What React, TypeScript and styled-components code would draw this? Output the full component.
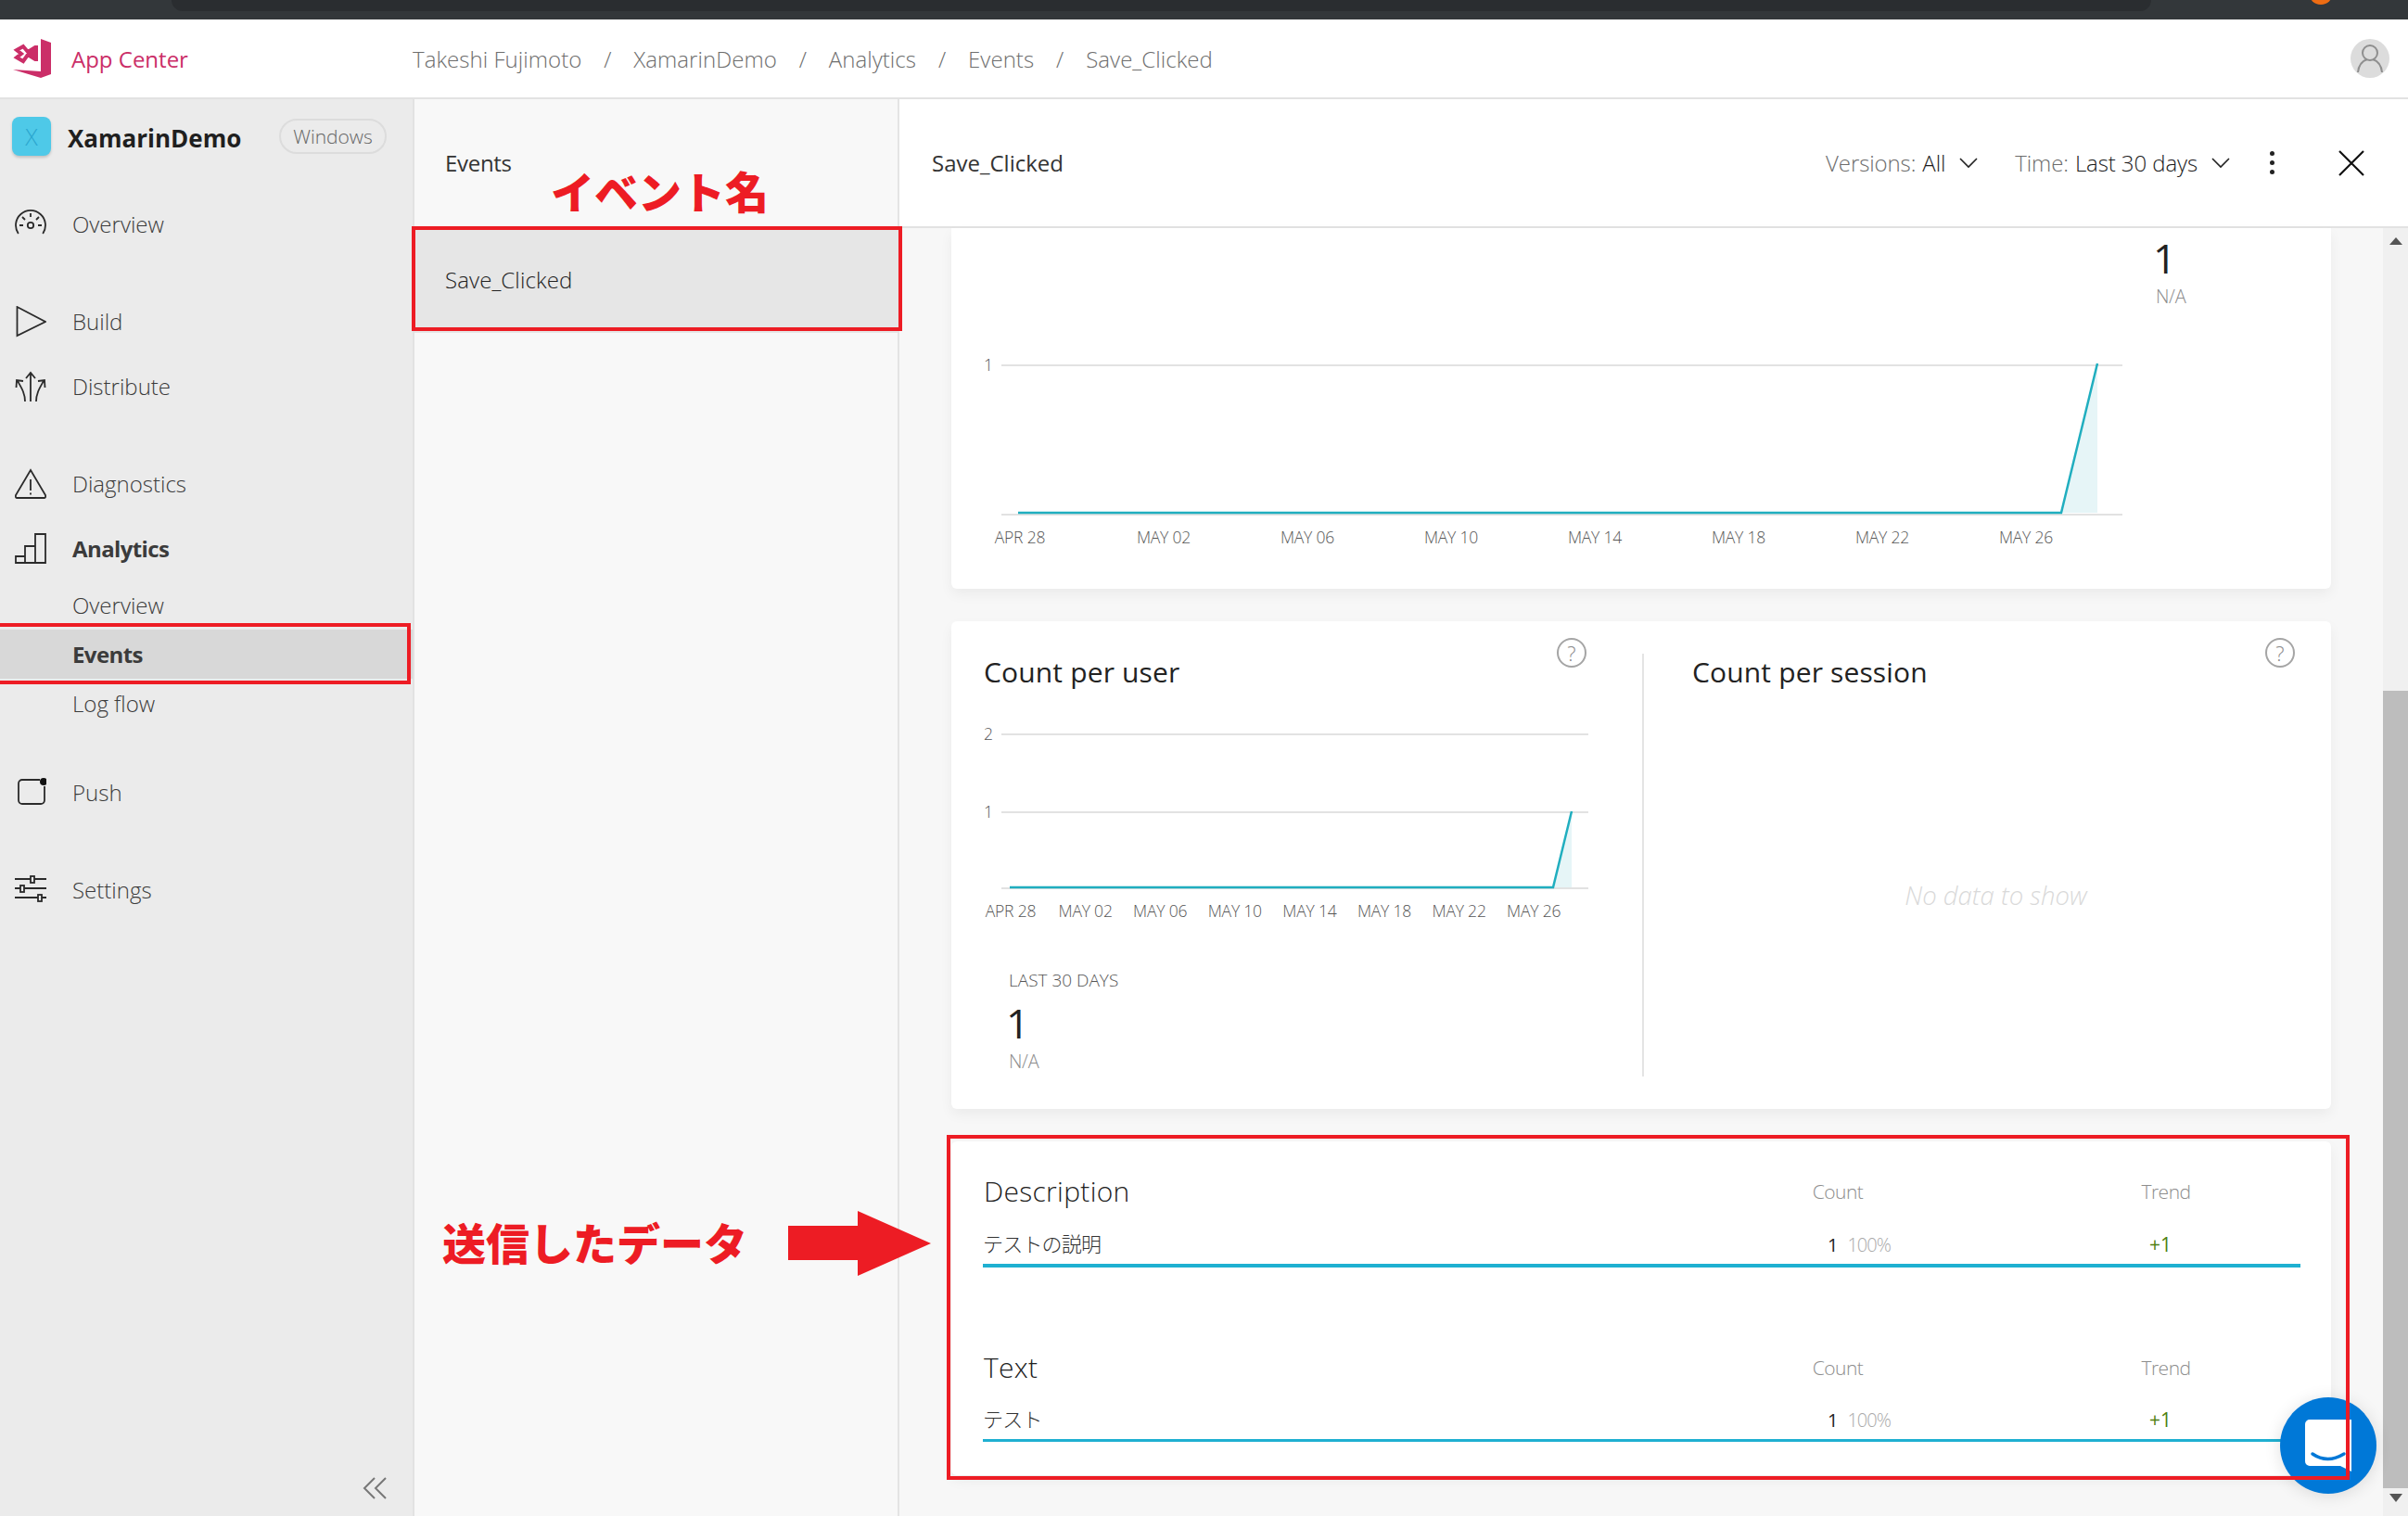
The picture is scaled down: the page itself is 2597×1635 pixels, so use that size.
import React from "react";
import styled, { createGlobalStyle } from "styled-components";

const Global = createGlobalStyle`
  html, body { margin: 0; padding: 0; background: #fff; }
  * { box-sizing: border-box; }
  body { font-family: "Open Sans", "Noto Sans CJK JP", sans-serif; color: #333; }
`;

const Page = styled.div`position: relative; width: 2597px; height: 1635px; display: flex; flex-direction: column; overflow: hidden;`;
const BrowserBar = styled.div`height: 21px; flex: none; background: #33373a; display: flex; overflow: hidden;`;
const AddressBar = styled.div`margin-left: 185px; width: 2135px; height: 12px; background: #2a2d30; border-radius: 0 0 14px 14px;`;
const OrangeDot = styled.div`margin: -21px 0 0 170px; width: 26px; height: 26px; border-radius: 50%; background: #ee6c13;`;

const Header = styled.header`height: 86px; flex: none; background: #fff; border-bottom: 2px solid #e2e2e2; display: flex; align-items: center; padding-left: 14px; padding-right: 20px;`;
const Brand = styled.div`width: 431px; display: flex; align-items: center; gap: 21px; color: #cb2e68; font-size: 24px;`;
const Crumbs = styled.nav`display: flex; align-items: center; flex: 1; font-size: 24px; font-weight: 300; color: #6e6e6e; letter-spacing: 0.05px;`;
const Sep = styled.span`width: 56px; text-align: center;`;
const Avatar = styled.div`width: 42px; height: 42px; border-radius: 50%; background: #dcdcdc; display: flex; align-items: center; justify-content: center;`;

const Body = styled.div`flex: 1; display: flex; min-height: 0;`;
const Sidebar = styled.aside`width: 447px; flex: none; background: #ebebeb; border-right: 2px solid #e2e2e2; display: flex; flex-direction: column;`;
const AppRow = styled.div`margin: 19px 0 0 13px; height: 42px; display: flex; align-items: center;`;
const AppIcon = styled.div`width: 42px; height: 42px; border-radius: 8px; background: #4ec9e8; color: #2ba6cf; font-size: 25px; font-weight: 300; display: flex; align-items: center; justify-content: center; box-shadow: 0 2px 3px rgba(0,0,0,.18);`;
const AppName = styled.div`margin-left: 18px; padding-top: 4px; width: 228px; font-size: 26px; font-weight: 700; color: #1f1f1f;`;
const Pill = styled.div`width: 116px; height: 38px; border: 2px solid #dcdcdc; border-radius: 19px; display: flex; align-items: center; justify-content: center; font-size: 21px; font-weight: 300; color: #666;`;
const NavGroup = styled.div<{ $top: number; $gap?: number }>`margin-top: ${p => p.$top}px; display: flex; flex-direction: column; gap: ${p => p.$gap ?? 0}px;`;
const NavLabel = styled.span`margin-top: -2px;`;
const NavItem = styled.div<{ $bold?: boolean }>`height: 60px; display: flex; align-items: center; padding-left: 16px; gap: 28px; font-size: 24px; font-weight: ${p => (p.$bold ? 700 : 300)}; color: #3b3b3b; letter-spacing: ${p => (p.$bold ? "-0.6px" : "0")};`;
const SubList = styled.div`margin-top: -6px; display: flex; flex-direction: column;`;
const SubItem = styled.div<{ $active?: boolean }>`height: 53px; display: flex; align-items: center; padding-left: 78px; font-size: 24px; font-weight: ${p => (p.$active ? 700 : 300)}; color: #3b3b3b; letter-spacing: ${p => (p.$active ? "-0.6px" : "0")}; background: ${p => (p.$active ? "#d8d8d8" : "transparent")};`;
const Collapse = styled.div`margin-top: auto; height: 60px; display: flex; align-items: center; justify-content: flex-end; padding-right: 28px;`;
const IconSvg = styled.svg`width: 34px; height: 34px; flex: none; fill: none; stroke: #2b2b2b; stroke-width: 1.8;`;

const EventsPanel = styled.section`width: 523px; flex: none; background: #f8f8f8; border-right: 2px solid #e4e4e4;`;
const PanelHead = styled.div`height: 137px; display: flex; align-items: center; padding-left: 33px; font-size: 24px; color: #333; letter-spacing: -0.3px;`;
const EventRow = styled.div`height: 113px; margin-top: 2px; padding-bottom: 2px; background: #e6e6e6; display: flex; align-items: center; padding-left: 33px; font-size: 24px; font-weight: 300; color: #222; letter-spacing: 0.1px;`;

const Detail = styled.main`flex: 1; min-width: 0; display: flex; flex-direction: column;`;
const DetailHead = styled.div`height: 139px; flex: none; background: #fff; border-bottom: 2px solid #e2e2e2; display: flex; align-items: center; padding-left: 35px; padding-right: 47px; font-size: 24px; font-weight: 300;`;
const DetailTitle = styled.div`flex: 1; font-weight: 400; font-size: 24px; color: #333;`;
const Filter = styled.div<{ $gap: number }>`display: flex; align-items: center; margin-right: ${p => p.$gap}px; color: #6c6c6c; letter-spacing: -0.1px;`;
const FilterValue = styled.span`color: #1c1c1c; margin-left: 7px; margin-right: 15px;`;
const Kebab = styled.div`width: 6px; display: flex; flex-direction: column; gap: 5px; margin-right: 68px;`;
const Dot = styled.i`width: 5px; height: 5px; border-radius: 50%; background: #222;`;

const Scroller = styled.div`flex: 1; min-height: 0; display: flex; background: #f7f7f7;`;
const Content = styled.div`flex: 1; padding: 0 56px; display: flex; flex-direction: column;`;
const Card = styled.section`background: #fff; border-radius: 6px; box-shadow: 0 6px 14px rgba(0,0,0,.05);`;
const TrendCard = styled(Card)`height: 389px; display: flex; padding-left: 20px; border-radius: 0 0 6px 6px;`;
const Chart = styled.svg`display: block; flex: none; overflow: visible;`;
const AxisText = styled.text`font-family: "Open Sans", sans-serif; font-size: 17.5px; font-weight: 300; fill: #555; letter-spacing: -0.2px;`;
const TrendChart = styled(Chart)`margin-top: 120px; margin-right: 19px;`;
const Stat = styled.div<{ $top: number; $left?: number }>`margin-top: ${p => p.$top}px; margin-left: ${p => p.$left ?? 0}px;`;
const StatLabel = styled.div`font-size: 19px; line-height: 24px; font-weight: 300; color: #555;`;
const StatValue = styled.div<{ $top?: number }>`margin: ${p => p.$top ?? 0}px 0 0 -3px; font-size: 44px; line-height: 48px; font-weight: 400; color: #222;`;
const StatDelta = styled.div`margin-top: 6px; font-size: 20px; line-height: 24px; font-weight: 300; color: #8c8c8c; letter-spacing: -0.3px;`;

const SplitCard = styled(Card)`margin-top: 35px; height: 526px; display: flex;`;
const LeftCol = styled.div`width: 745px; flex: none; padding: 18px 60px 0 35px;`;
const RightCol = styled.div`flex: 1; padding: 18px 39px 0 52px;`;
const Divider = styled.div`width: 2px; flex: none; margin: 35px 0; background: #e4e4e4;`;
const CardHead = styled.div`display: flex; justify-content: space-between; align-items: flex-start;`;
const CardTitle = styled.h2`margin: 17px 0 0; font-size: 30px; line-height: 40px; font-weight: 400; color: #222; letter-spacing: 0.15px;`;
const Help = styled.div`width: 32px; height: 32px; border: 2px solid #a5a5a5; border-radius: 50%; display: flex; align-items: center; justify-content: center; font-size: 22px; font-weight: 300; color: #8a8a8a;`;
const UserChart = styled(Chart)`margin: 25px 0 0 -15px;`;
const Empty = styled.div`margin-top: 201px; padding-left: 5px; text-align: center; font-size: 27.5px; line-height: 40px; font-style: italic; font-weight: 300; color: #d9d9d9;`;

const PropsCard = styled(Card)`margin-top: 35px; height: 360px; padding: 33px 34px 0;`;
const PropGroup = styled.div<{ $top?: number }>`margin-top: ${p => p.$top ?? 0}px;`;
const Grid = styled.div`display: grid; grid-template-columns: 709px 426px 282px; align-items: center; height: 40px;`;
const PropTitle = styled.div`padding-left: 1px; font-size: 30px; font-weight: 300; color: #222; letter-spacing: 0.3px;`;
const ColHead = styled.div`font-size: 21px; font-weight: 300; color: #8d8d8d; text-align: center; letter-spacing: -0.5px;`;
const ValueGrid = styled(Grid)<{ $top: number }>`margin-top: ${p => p.$top}px;`;
const PropName = styled.div`padding-bottom: 4px; font-size: 22px; font-weight: 300; color: #333; font-family: "Noto Sans CJK JP", sans-serif; letter-spacing: -0.8px;`;
const CountCell = styled.div`padding-left: 202px; display: flex; align-items: baseline; gap: 10px; font-size: 20px; color: #222;`;
const Percent = styled.span`color: #aaa; font-weight: 300; letter-spacing: -1px;`;
const Delta = styled.div`padding-right: 12px; text-align: center; font-size: 21px; color: #4e7f10;`;
const Bar = styled.div<{ $h: number }>`margin-top: 1px; margin-right: -1px; height: ${p => p.$h}px; background: #1fb0d1;`;

const Scrollbar = styled.div`width: 27px; flex: none; background: #f0f0f0; display: flex; flex-direction: column; align-items: center;`;
const ArrowCap = styled.svg`width: 14px; height: 30px; flex: none; fill: #555;`;
const Thumb = styled.div`margin-top: 469px; width: 100%; height: 873px; background: #bdbdbd;`;

const Overlay = styled.div<{ $x: number; $y: number; $w: number; $h: number }>`position: absolute; left: ${p => p.$x}px; top: ${p => p.$y}px; width: ${p => p.$w}px; height: ${p => p.$h}px; border: 4px solid #ed1c24;`;
const Note = styled.div<{ $x: number; $y: number; $size: number }>`position: absolute; left: ${p => p.$x}px; top: ${p => p.$y}px; font-family: "Noto Sans CJK JP", sans-serif; font-weight: 900; font-size: ${p => p.$size}px; line-height: 1; color: #ed1c24; white-space: nowrap;`;
const ArrowSvg = styled.svg`position: absolute; left: 850px; top: 1306px; width: 154px; height: 70px; fill: #ed1c24;`;
const ChatBubble = styled.div`position: absolute; left: 2459px; top: 1507px; width: 104px; height: 104px; border-radius: 50%; background: #0078d7; display: flex; align-items: center; justify-content: center; box-shadow: 0 2px 18px rgba(0,0,0,.12);`;

const Icon = ({ children }: { children: React.ReactNode }) => <IconSvg viewBox="0 0 34 34">{children}</IconSvg>;

const Logo = () => (
  <svg width="42" height="43" viewBox="0 0 42 43" style={{ flex: "none" }}>
    <path fill="#cb2e68" d="M30 0 L41 4 V38 L30 42 L0 33 L30 35 Z" />
    <path fill="none" stroke="#cb2e68" strokeWidth="4" d="M4 12 L11 8 L16 14 L24 9 H25 V22 H24 L16 17 L11 24 L4 20 L9 16 Z" />
    <path fill="#cb2e68" d="M16 14 L25 9 V22 L16 17 Z" />
  </svg>
);

const Chevron = () => (
  <svg width="20" height="12" viewBox="0 0 20 12" fill="none" stroke="#222" strokeWidth="1.6"><path d="M1 1 L10 10 L19 1" /></svg>
);

const TeamLabels = ["APR 28", "MAY 02", "MAY 06", "MAY 10", "MAY 14", "MAY 18", "MAY 22", "MAY 26"];

const TrendGraph = () => (
  <TrendChart width={1260} height={240} viewBox="0 0 1260 240">
    <AxisText x={15} y={34}>1</AxisText>
    <line x1={34} x2={1243} y1={28} y2={28} stroke="#e2e2e2" strokeWidth={2} />
    <line x1={34} x2={1243} y1={189} y2={189} stroke="#e2e2e2" strokeWidth={2} />
    <path d="M1177 187 L1216 26 V187 Z" fill="#e6f5f7" />
    <path d="M52 187 H1177 L1216 26" fill="none" stroke="#20aebf" strokeWidth={2.5} />
    {TeamLabels.map((l, i) => (
      <AxisText key={l} x={54 + i * 155} y={220} textAnchor="middle">{l}</AxisText>
    ))}
  </TrendChart>
);

const UserGraph = () => (
  <UserChart width={680} height={230} viewBox="0 0 680 230">
    <AxisText x={15} y={28}>2</AxisText>
    <AxisText x={15} y={112}>1</AxisText>
    <line x1={34} x2={667} y1={22} y2={22} stroke="#e2e2e2" strokeWidth={2} />
    <line x1={34} x2={667} y1={106} y2={106} stroke="#e2e2e2" strokeWidth={2} />
    <line x1={34} x2={667} y1={188} y2={188} stroke="#e2e2e2" strokeWidth={2} />
    <path d="M629 187 L649 105 V187 Z" fill="#e6f5f7" />
    <path d="M43 187 H629 L649 105" fill="none" stroke="#20aebf" strokeWidth={2.5} />
    {TeamLabels.map((l, i) => (
      <AxisText key={l} x={44 + i * 80.6} y={219} textAnchor="middle">{l}</AxisText>
    ))}
  </UserChart>
);

const PropBlock = ({ title, value, top, bar, valueTop }: { title: string; value: string; top?: number; bar: number; valueTop: number }) => (
  <PropGroup $top={top}>
    <Grid>
      <PropTitle>{title}</PropTitle>
      <ColHead>Count</ColHead>
      <ColHead>Trend</ColHead>
    </Grid>
    <ValueGrid $top={valueTop}>
      <PropName>{value}</PropName>
      <CountCell>1 <Percent>100%</Percent></CountCell>
      <Delta>+1</Delta>
    </ValueGrid>
    <Bar $h={bar} />
  </PropGroup>
);

export default function App() {
  return (
    <Page>
      <Global />
      <BrowserBar><AddressBar /><OrangeDot /></BrowserBar>
      <Header>
        <Brand><Logo />App Center</Brand>
        <Crumbs>
          <span>Takeshi Fujimoto</span><Sep>/</Sep>
          <span>XamarinDemo</span><Sep>/</Sep>
          <span>Analytics</span><Sep>/</Sep>
          <span>Events</span><Sep>/</Sep>
          <span>Save_Clicked</span>
        </Crumbs>
        <Avatar>
          <svg width="30" height="34" viewBox="0 0 30 34" fill="none" stroke="#8e8e8e" strokeWidth="2">
            <circle cx="15" cy="11" r="8" />
            <path d="M2 32 C3 22 9 19 12 18 M28 32 C27 22 21 19 18 18" />
          </svg>
        </Avatar>
      </Header>
      <Body>
        <Sidebar>
          <AppRow>
            <AppIcon>X</AppIcon>
            <AppName>XamarinDemo</AppName>
            <Pill>Windows</Pill>
          </AppRow>
          <NavGroup $top={44}>
            <NavItem>
              <Icon>
                <path d="M3.8 27 A16 16 0 1 1 30.2 27" />
                <circle cx="17" cy="18" r="3.2" />
                <path d="M17 5 V9 M5 18 H9 M25 18 H29 M8 9 L11 12 M26 9 L23 12" />
              </Icon>
              <NavLabel>Overview</NavLabel>
            </NavItem>
          </NavGroup>
          <NavGroup $top={45} $gap={10}>
            <NavItem><Icon><path d="M2.5 1 L33 17 L2.5 32 Z" /></Icon><NavLabel>Build</NavLabel></NavItem>
            <NavItem>
              <Icon>
                <path d="M17 33 V2 M12 8 L17 2 L22 8" />
                <path d="M11 33 C11 24 7 18 3 11 M1.5 18 L2 10 L9 11" />
                <path d="M23 33 C23 24 27 18 31 11 M32.5 18 L32 10 L25 11" />
              </Icon>
              <NavLabel>Distribute</NavLabel>
            </NavItem>
          </NavGroup>
          <NavGroup $top={45} $gap={10}>
            <NavItem>
              <Icon>
                <path d="M17 2 L33 29 Q33.5 32 32 32 H2 Q.5 32 1 29 Z" />
                <path d="M17 12 V24 M17 26.5 V28.5" />
              </Icon>
              <NavLabel>Diagnostics</NavLabel>
            </NavItem>
            <NavItem $bold>
              <Icon>
                <path d="M1 25 H11 V32 H1 Z M11 14 H22 V32 H11 Z M22 1 H33 V32 H22 Z" />
              </Icon>
              <NavLabel>Analytics</NavLabel>
            </NavItem>
            <SubList>
              <SubItem>Overview</SubItem>
              <SubItem $active>Events</SubItem>
              <SubItem>Log flow</SubItem>
            </SubList>
          </NavGroup>
          <NavGroup $top={40}>
            <NavItem>
              <Icon>
                <path d="M27 3 H8 a4 4 0 0 0 -4 4 V25 a4 4 0 0 0 4 4 H28 a4 4 0 0 0 4 -4 V10" />
                <circle cx="31" cy="5" r="4" fill="#111" stroke="none" />
              </Icon>
              <NavLabel>Push</NavLabel>
            </NavItem>
          </NavGroup>
          <NavGroup $top={45}>
            <NavItem>
              <Icon>
                <path d="M0 5 H17 M21 5 H34 M0 15 H6 M10 15 H34 M0 25 H25 M29 25 H34" />
                <rect x="17" y="2" width="4" height="7" />
                <rect x="6" y="12" width="4" height="7" />
                <rect x="25" y="22" width="4" height="7" />
              </Icon>
              <NavLabel>Settings</NavLabel>
            </NavItem>
          </NavGroup>
          <Collapse>
            <svg width="26" height="24" viewBox="0 0 26 24" fill="none" stroke="#777" strokeWidth="2">
              <path d="M13 1 L2 12 L13 23 M25 1 L14 12 L25 23" />
            </svg>
          </Collapse>
        </Sidebar>
        <EventsPanel>
          <PanelHead>Events</PanelHead>
          <EventRow>Save_Clicked</EventRow>
        </EventsPanel>
        <Detail>
          <DetailHead>
            <DetailTitle>Save_Clicked</DetailTitle>
            <Filter $gap={40}>Versions:<FilterValue>All</FilterValue><Chevron /></Filter>
            <Filter $gap={43}>Time:<FilterValue>Last 30 days</FilterValue><Chevron /></Filter>
            <Kebab><Dot /><Dot /><Dot /></Kebab>
            <svg width="28" height="28" viewBox="0 0 28 28" fill="none" stroke="#111" strokeWidth="2.2"><path d="M1 1 L27 27 M27 1 L1 27" /></svg>
          </DetailHead>
          <Scroller>
            <Content>
              <TrendCard>
                <TrendGraph />
                <Stat $top={8}>
                  <StatValue>1</StatValue>
                  <StatDelta>N/A</StatDelta>
                </Stat>
              </TrendCard>
              <SplitCard>
                <LeftCol>
                  <CardHead><CardTitle>Count per user</CardTitle><Help>?</Help></CardHead>
                  <UserGraph />
                  <Stat $top={45} $left={27}>
                    <StatLabel>LAST 30 DAYS</StatLabel>
                    <StatValue $top={10}>1</StatValue>
                    <StatDelta>N/A</StatDelta>
                  </Stat>
                </LeftCol>
                <Divider />
                <RightCol>
                  <CardHead><CardTitle>Count per session</CardTitle><Help>?</Help></CardHead>
                  <Empty>No data to show</Empty>
                </RightCol>
              </SplitCard>
              <PropsCard>
                <PropBlock title="Description" value="テストの説明" bar={4} valueTop={18} />
                <PropBlock title="Text" value="テスト" top={87} bar={3} valueTop={17} />
              </PropsCard>
            </Content>
            <Scrollbar>
              <ArrowCap viewBox="0 0 14 30"><path d="M7 10 L14 18 H0 Z" /></ArrowCap>
              <Thumb />
              <ArrowCap viewBox="0 0 14 30"><path d="M0 6 H14 L7 15 Z" /></ArrowCap>
            </Scrollbar>
          </Scroller>
        </Detail>
      </Body>

      <ChatBubble>
        <svg width="50" height="56" viewBox="0 0 50 56">
          <path fill="#fff" d="M5 0 H50 V56 L38 50 H5 a5 5 0 0 1 -5 -5 V5 a5 5 0 0 1 5 -5 Z" />
          <path fill="none" stroke="#0078d7" strokeWidth="3.5" strokeLinecap="round" d="M8 37 Q24 48 42 37" />
        </svg>
      </ChatBubble>
      <Overlay $x={-4} $y={672} $w={447} $h={66} />
      <Overlay $x={444} $y={244} $w={529} $h={113} />
      <Overlay $x={1021} $y={1224} $w={1513} $h={372} />
      <Note $x={594} $y={181} $size={47}>イベント名</Note>
      <Note $x={477} $y={1315} $size={47}>送信したデータ</Note>
      <ArrowSvg viewBox="0 0 154 70"><path d="M0 16 H75 V0 L154 35 L75 70 V53 H0 Z" /></ArrowSvg>
    </Page>
  );
}
